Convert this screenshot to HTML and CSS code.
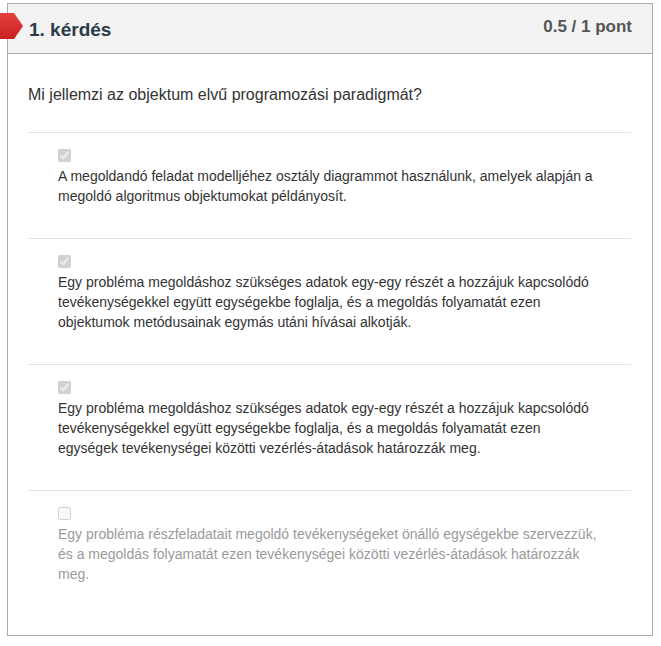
FILE: index.html
```html
<!DOCTYPE html>
<html lang="hu">
<head>
<meta charset="utf-8">
<title>1. kérdés</title>
<link rel="stylesheet" href="styles.css">
</head>
<body>
<div class="card">
  <svg class="badge" width="23" height="26" viewBox="0 0 23 26" aria-hidden="true">
    <defs>
      <linearGradient id="bg" x1="0" y1="0" x2="0" y2="1">
        <stop offset="0" stop-color="#e8403f"/>
        <stop offset="1" stop-color="#c8201f"/>
      </linearGradient>
    </defs>
    <polygon points="0,0 14,0 23,13 14,26 0,26" fill="url(#bg)"/>
  </svg>
  <div class="card-header">
    <h2 class="title">1. kérdés</h2>
    <span class="points">0.5 / 1 pont</span>
  </div>
  <div class="card-body">
    <p class="question">Mi jellemzi az objektum elvű programozási paradigmát?</p>
    <div class="answers">
      <label class="answer">
        <input type="checkbox" class="check" checked disabled>
        <span class="answer-text">A megoldandó feladat modelljéhez osztály diagrammot használunk, amelyek alapján a megoldó algoritmus objektumokat példányosít.</span>
      </label>
      <label class="answer">
        <input type="checkbox" class="check" checked disabled>
        <span class="answer-text">Egy probléma megoldáshoz szükséges adatok egy-egy részét a hozzájuk kapcsolódó tevékenységekkel együtt egységekbe foglalja, és a megoldás folyamatát ezen objektumok metódusainak egymás utáni hívásai alkotják.</span>
      </label>
      <label class="answer">
        <input type="checkbox" class="check" checked disabled>
        <span class="answer-text">Egy probléma megoldáshoz szükséges adatok egy-egy részét a hozzájuk kapcsolódó tevékenységekkel együtt egységekbe foglalja, és a megoldás folyamatát ezen egységek tevékenységei közötti vezérlés-átadások határozzák meg.</span>
      </label>
      <label class="answer answer-muted">
        <input type="checkbox" class="check" disabled>
        <span class="answer-text">Egy probléma részfeladatait megoldó tevékenységeket önálló egységekbe szervezzük, és a megoldás folyamatát ezen tevékenységei közötti vezérlés-átadások határozzák meg.</span>
      </label>
    </div>
  </div>
</div>
</body>
</html>
```

FILE: styles.css
```css
* { box-sizing: border-box; }

body {
  margin: 0;
  background: #ffffff;
  font-family: "Liberation Sans", Arial, sans-serif;
  color: #333333;
}

.card {
  position: relative;
  width: 646px;
  margin: 3px 0 0 7px;
  border: 1px solid #aaaaaa;
  background: #ffffff;
}

.badge {
  position: absolute;
  left: -8px;
  top: 9px;
  display: block;
}

.card-header {
  height: 50px;
  display: flex;
  align-items: center;
  justify-content: space-between;
  padding: 0 20px 0 21px;
  background: #f3f3f3;
  border-bottom: 1px solid #aaaaaa;
}

.title {
  margin: 0;
  font-size: 19px;
  font-weight: bold;
  color: #2b3a4a;
  line-height: 22px;
  padding-top: 3px;
}

.points {
  font-size: 17px;
  font-weight: bold;
  color: #555555;
  padding-bottom: 4px;
}

.card-body {
  padding: 30px 21px 19px 20px;
}

.question {
  margin: 0 0 26px 0;
  font-size: 16px;
  line-height: 22px;
  color: #333333;
}

.answer {
  display: block;
  border-top: 1px solid #e3e3e3;
  padding: 16px 30px 32px 30px;
}

.check {
  display: block;
  width: 13px;
  height: 13px;
  margin: 0 0 4px 0;
}

.answer-text {
  display: block;
  font-size: 14px;
  line-height: 20px;
  color: #333333;
}

.answer-muted .answer-text {
  color: #9a9a9a;
}
```
